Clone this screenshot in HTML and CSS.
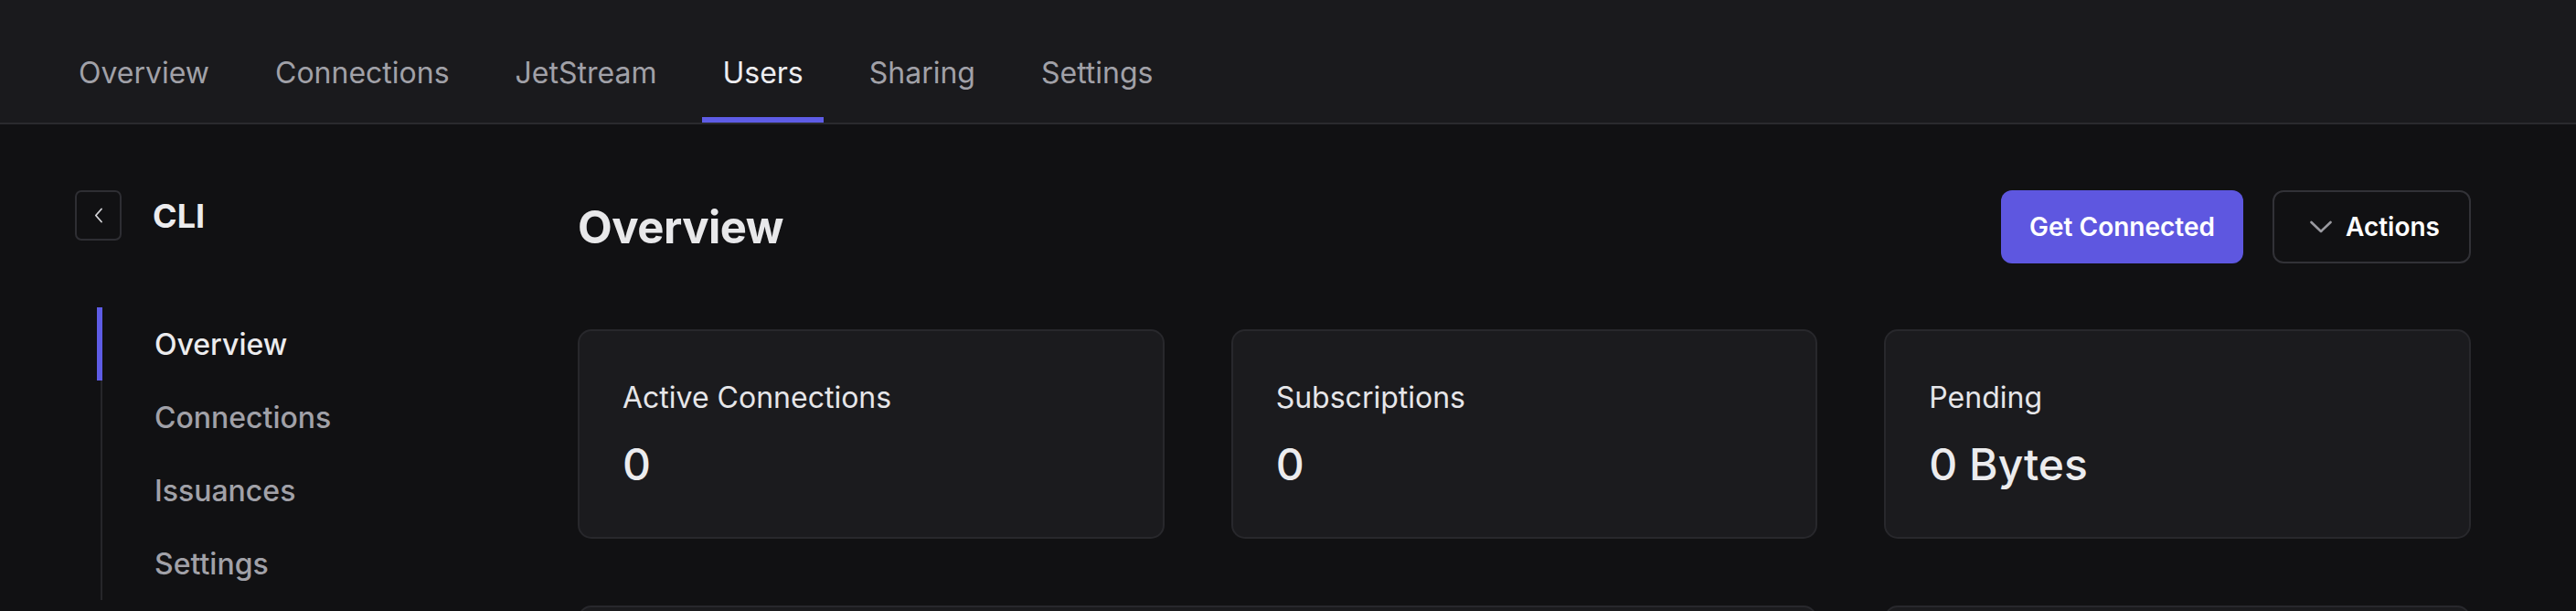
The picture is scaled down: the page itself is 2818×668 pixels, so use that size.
FILE: index.html
```html
<!DOCTYPE html>
<html lang="en">
<head>
<meta charset="utf-8">
<title>CLI – Overview</title>
<link rel="stylesheet" href="styles.css">
</head>
<body>
<header class="topbar">
  <nav class="tabs">
    <a class="tab">Overview</a>
    <a class="tab">Connections</a>
    <a class="tab">JetStream</a>
    <a class="tab active">Users</a>
    <a class="tab">Sharing</a>
    <a class="tab">Settings</a>
  </nav>
</header>
<div class="layout">
  <aside class="sidebar">
    <div class="side-head">
      <button class="back-btn" aria-label="Back">
        <svg width="10" height="17" viewBox="0 0 10 17"><polyline points="8,1.5 1.8,8.5 8,15.5" fill="none" stroke="#d4d4d8" stroke-width="1.8" stroke-linecap="round" stroke-linejoin="round"/></svg>
      </button>
      <h2 class="side-title">CLI</h2>
    </div>
    <ul class="side-nav">
      <li class="side-item active">Overview</li>
      <li class="side-item">Connections</li>
      <li class="side-item">Issuances</li>
      <li class="side-item">Settings</li>
    </ul>
  </aside>
  <main class="main">
    <div class="main-head">
      <h1 class="page-title">Overview</h1>
      <div class="actions">
        <button class="btn btn-primary">Get Connected</button>
        <button class="btn btn-outline">
          <svg width="26" height="14" viewBox="0 0 26 14"><polyline points="2.5,2 13,12 23.5,2" fill="none" stroke="#9a9aa0" stroke-width="2.6" stroke-linecap="round" stroke-linejoin="round"/></svg>
          <span>Actions</span>
        </button>
      </div>
    </div>
    <section class="cards">
      <div class="card">
        <div class="card-label">Active Connections</div>
        <div class="card-value">0</div>
      </div>
      <div class="card">
        <div class="card-label">Subscriptions</div>
        <div class="card-value">0</div>
      </div>
      <div class="card">
        <div class="card-label">Pending</div>
        <div class="card-value">0 Bytes</div>
      </div>
      <div class="card card-wide"></div>
      <div class="card card-tall"></div>
    </section>
  </main>
</div>
</body>
</html>
```
FILE: styles.css
```css
html, body {
  margin: 0;
  padding: 0;
  overflow: hidden;
}
body {
  background: #111113;
  color: #ececee;
  font-family: Inter, "Noto Sans", sans-serif;
}
.topbar {
  background: #1a1a1d;
  height: 134px;
  border-bottom: 2px solid #2a2a2e;
  box-sizing: content-box;
}
.tabs {
  display: flex;
  height: 100%;
  padding-left: 64px;
  padding-top: 24px;
  box-sizing: border-box;
  gap: 28px;
}
.tab {
  position: relative;
  display: flex;
  align-items: center;
  padding: 0 22px;
  font-size: 32px;
  font-weight: 400;
  color: #a1a1a8;
}
.tab.active {
  color: #ededf0;
}
.tab.active::after {
  content: "";
  position: absolute;
  left: 0;
  right: 0;
  bottom: 0;
  height: 6px;
  background: #5e5ce6;
}
.layout {
  display: grid;
  grid-template-columns: 632px 1fr;
  padding-right: 115px;
}
.sidebar {
  padding: 72px 0 0 82px;
}
.side-head {
  display: flex;
  align-items: center;
  gap: 34px;
}
.back-btn {
  width: 51px;
  height: 55px;
  border: 2px solid #2e2e33;
  border-radius: 7px;
  background: transparent;
  display: flex;
  align-items: center;
  justify-content: center;
  padding: 0;
}
.side-title {
  margin: 0;
  font-size: 36px;
  font-weight: 700;
  color: #ececee;
  line-height: 1;
}
.side-nav {
  list-style: none;
  margin: 73px 0 0 28px;
  padding: 0;
  border-left: 2px solid #26262a;
}
.side-item {
  position: relative;
  height: 80px;
  display: flex;
  align-items: center;
  padding-left: 57px;
  font-size: 32px;
  font-weight: 500;
  color: #a1a1a8;
}
.side-item.active {
  color: #ececee;
}
.side-item.active::before {
  content: "";
  position: absolute;
  left: -6px;
  top: 0;
  width: 6px;
  height: 80px;
  background: #5e5ce6;
}
.main {
  padding-top: 72px;
}
.main-head {
  display: flex;
  align-items: center;
  justify-content: space-between;
  height: 80px;
}
.page-title {
  margin: 0;
  font-size: 49px;
  font-weight: 700;
  letter-spacing: -0.5px;
  color: #e8e8ea;
}
.actions {
  display: flex;
  gap: 32px;
}
.btn {
  height: 80px;
  border-radius: 12px;
  font-family: Inter, "Noto Sans", sans-serif;
  font-size: 28px;
  font-weight: 600;
  color: #ffffff;
  display: flex;
  align-items: center;
  padding: 0 31px;
  box-sizing: border-box;
}
.btn-primary {
  background: #5e57e0;
  border: none;
}
.btn-outline {
  background: transparent;
  border: 2px solid #323237;
  padding: 0 32px 0 38px;
  gap: 14px;
}
.cards {
  margin-top: 72px;
  display: grid;
  grid-template-columns: repeat(3, 1fr);
  column-gap: 73px;
  row-gap: 73px;
}
.card {
  background: #1b1b1e;
  border: 2px solid #28282c;
  border-radius: 15px;
  padding: 53px 47px 50px;
}
.card-label {
  font-size: 32px;
  line-height: 39px;
  font-weight: 400;
  color: #e6e6e9;
}
.card-value {
  margin-top: 25px;
  font-size: 48px;
  line-height: 58px;
  font-weight: 500;
  color: #ececee;
}
.card-wide {
  grid-column: span 2;
  min-height: 300px;
}
.card-tall {
  min-height: 300px;
}
```
